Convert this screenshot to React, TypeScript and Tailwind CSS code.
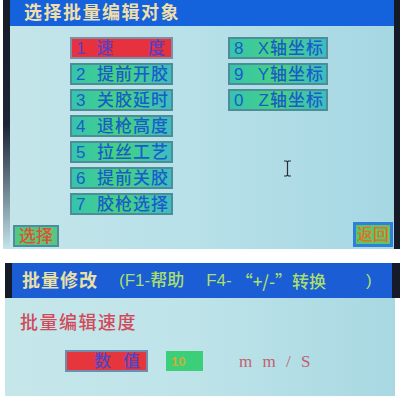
import React from 'react'

const font = { fontFamily: "'Liberation Sans', 'Noto Sans CJK SC', sans-serif" }

const leftKeys = [
  { n: '2', label: '提前开胶' },
  { n: '3', label: '关胶延时' },
  { n: '4', label: '退枪高度' },
  { n: '5', label: '拉丝工艺' },
  { n: '6', label: '提前关胶' },
  { n: '7', label: '胶枪选择' },
]

const rightKeys = [
  { n: '8', label: 'X轴坐标' },
  { n: '9', label: 'Y轴坐标' },
  { n: '0', label: 'Z轴坐标' },
]

function Key({ n, label }: { n: string; label: string }) {
  return (
    <div className="h-[22px] border-2 border-[#4f8c9a] bg-linear-to-r from-[#36c4ac] via-[#46d27e] to-[#3dbcc2] flex items-center pl-[4px] pr-[2px] text-[17px] leading-none font-medium text-[#1b5cc8]">
      <span>{n}</span>
      <span className="ml-auto tracking-[1px]">{label}</span>
    </div>
  )
}

export default function App() {
  return (
    <div className="w-[400px] h-[400px] bg-white overflow-hidden" style={font}>
      {/* 上屏 */}
      <div className="ml-[3px] w-[397px] h-[249px] flex">
        <div className="w-[7px] bg-linear-to-b from-[#151b29] via-[#1d2636] to-[#c4e5ea]" />
        <div className="flex-1 flex flex-col">
          <div className="h-[26px] bg-[#1462dc] flex items-center pl-[14px] text-[18px] font-bold tracking-[1.5px] text-[#f0dfaa] leading-none">
            选择批量编辑对象
          </div>
          <div className="flex-1 flex flex-col bg-linear-to-r from-[#c3e5ea] via-[#b7e0e8] to-[#a5d7e3] relative">
            <div className="flex pt-[11px] pl-[60px]">
              <div className="w-[103px] flex flex-col gap-[4px]">
                <div className="h-[22px] border-2 border-[#7d8ea6] bg-[#e5323e] flex items-center pl-[4px] pr-[6px] text-[17px] leading-none font-medium text-[#5b3fc0]">
                  <span>1</span>
                  <span className="ml-[11px]">速</span>
                  <span className="ml-auto">度</span>
                </div>
                {leftKeys.map((k) => (
                  <Key key={k.n} n={k.n} label={k.label} />
                ))}
              </div>
              <div className="w-[100px] ml-[55px] flex flex-col gap-[4px]">
                {rightKeys.map((k) => (
                  <Key key={k.n} n={k.n} label={k.label} />
                ))}
              </div>
            </div>
            <div className="mt-auto flex items-end justify-between pl-[3px] pr-[1px] pb-[2px]">
              <div className="w-[46px] h-[22px] border-2 border-[#4d8ca2] bg-[#55c880] flex items-center justify-center text-[17px] leading-none font-medium text-[#e2502c]">
                选择
              </div>
              <div className="w-[40px] h-[25px] border-[3px] border-[#2f80d8] bg-[#5cc46e] flex items-center justify-center text-[16px] leading-none font-medium text-[#e6701e]">
                返回
              </div>
            </div>
            <svg className="absolute left-[273px] top-[134px]" width="9" height="17" viewBox="0 0 9 17">
              <path d="M1 1h2.5l1 1 1-1H8M4.5 2v13M1 16h2.5l1-1 1 1H8" fill="none" stroke="#2a2f36" strokeWidth="1.2" />
            </svg>
          </div>
        </div>
        <div className="w-[6px] bg-[#141a26]" />
      </div>

      {/* 下屏 */}
      <div className="mt-[14px] ml-[5px] w-[395px] h-[133px] flex flex-col">
        <div className="h-[35px] flex">
          <div className="w-[7px] bg-[#151b29]" />
          <div className="flex-1 bg-[#1a5dd4] flex items-center pl-[10px] leading-none text-[#a9df6e]">
            <span className="text-[18px] font-bold tracking-[1px] text-[#e9e0a8]">批量修改</span>
            <span className="ml-[21px] text-[17px] font-medium">(F1-帮助</span>
            <span className="ml-[22px] text-[17px] font-medium">F4-</span>
            <span
              className="ml-[4px] text-[17px] font-medium"
              style={{ fontFamily: "'Noto Sans CJK SC', sans-serif" }}
            >
              “+/-”转换
            </span>
            <span className="ml-[40px] text-[17px] font-medium">)</span>
          </div>
          <div className="w-[8px] bg-[#151b29]" />
        </div>
        <div className="flex-1 mr-[5px] bg-linear-to-r from-[#c6e7ea] via-[#bde3e9] to-[#a8d8e2] flex flex-col pl-[15px] pt-[15px]">
          <div className="text-[18px] leading-[20px] font-medium tracking-[1.5px] text-[#d04a5a]">批量编辑速度</div>
          <div className="mt-[17px] flex items-center">
            <div className="ml-[45px] w-[83px] h-[22px] border-2 border-[#6f8eae] bg-[#e5363e] flex items-center pl-[27px] pr-[6px] text-[17px] leading-none font-medium text-[#4b46c6]">
              <span>数</span>
              <span className="ml-auto">值</span>
            </div>
            <div className="ml-[18px] w-[37px] h-[20px] bg-[#3ccf7a] flex items-center pl-[5px] text-[13px] font-bold leading-none text-[#c2b238]">
              10
            </div>
            <div className="ml-[36px] text-[17px] leading-none tracking-[3px] text-[#c4606e]" style={{ fontFamily: "'Liberation Serif', serif" }}>
              m m / S
            </div>
          </div>
        </div>
      </div>
    </div>
  )
}
